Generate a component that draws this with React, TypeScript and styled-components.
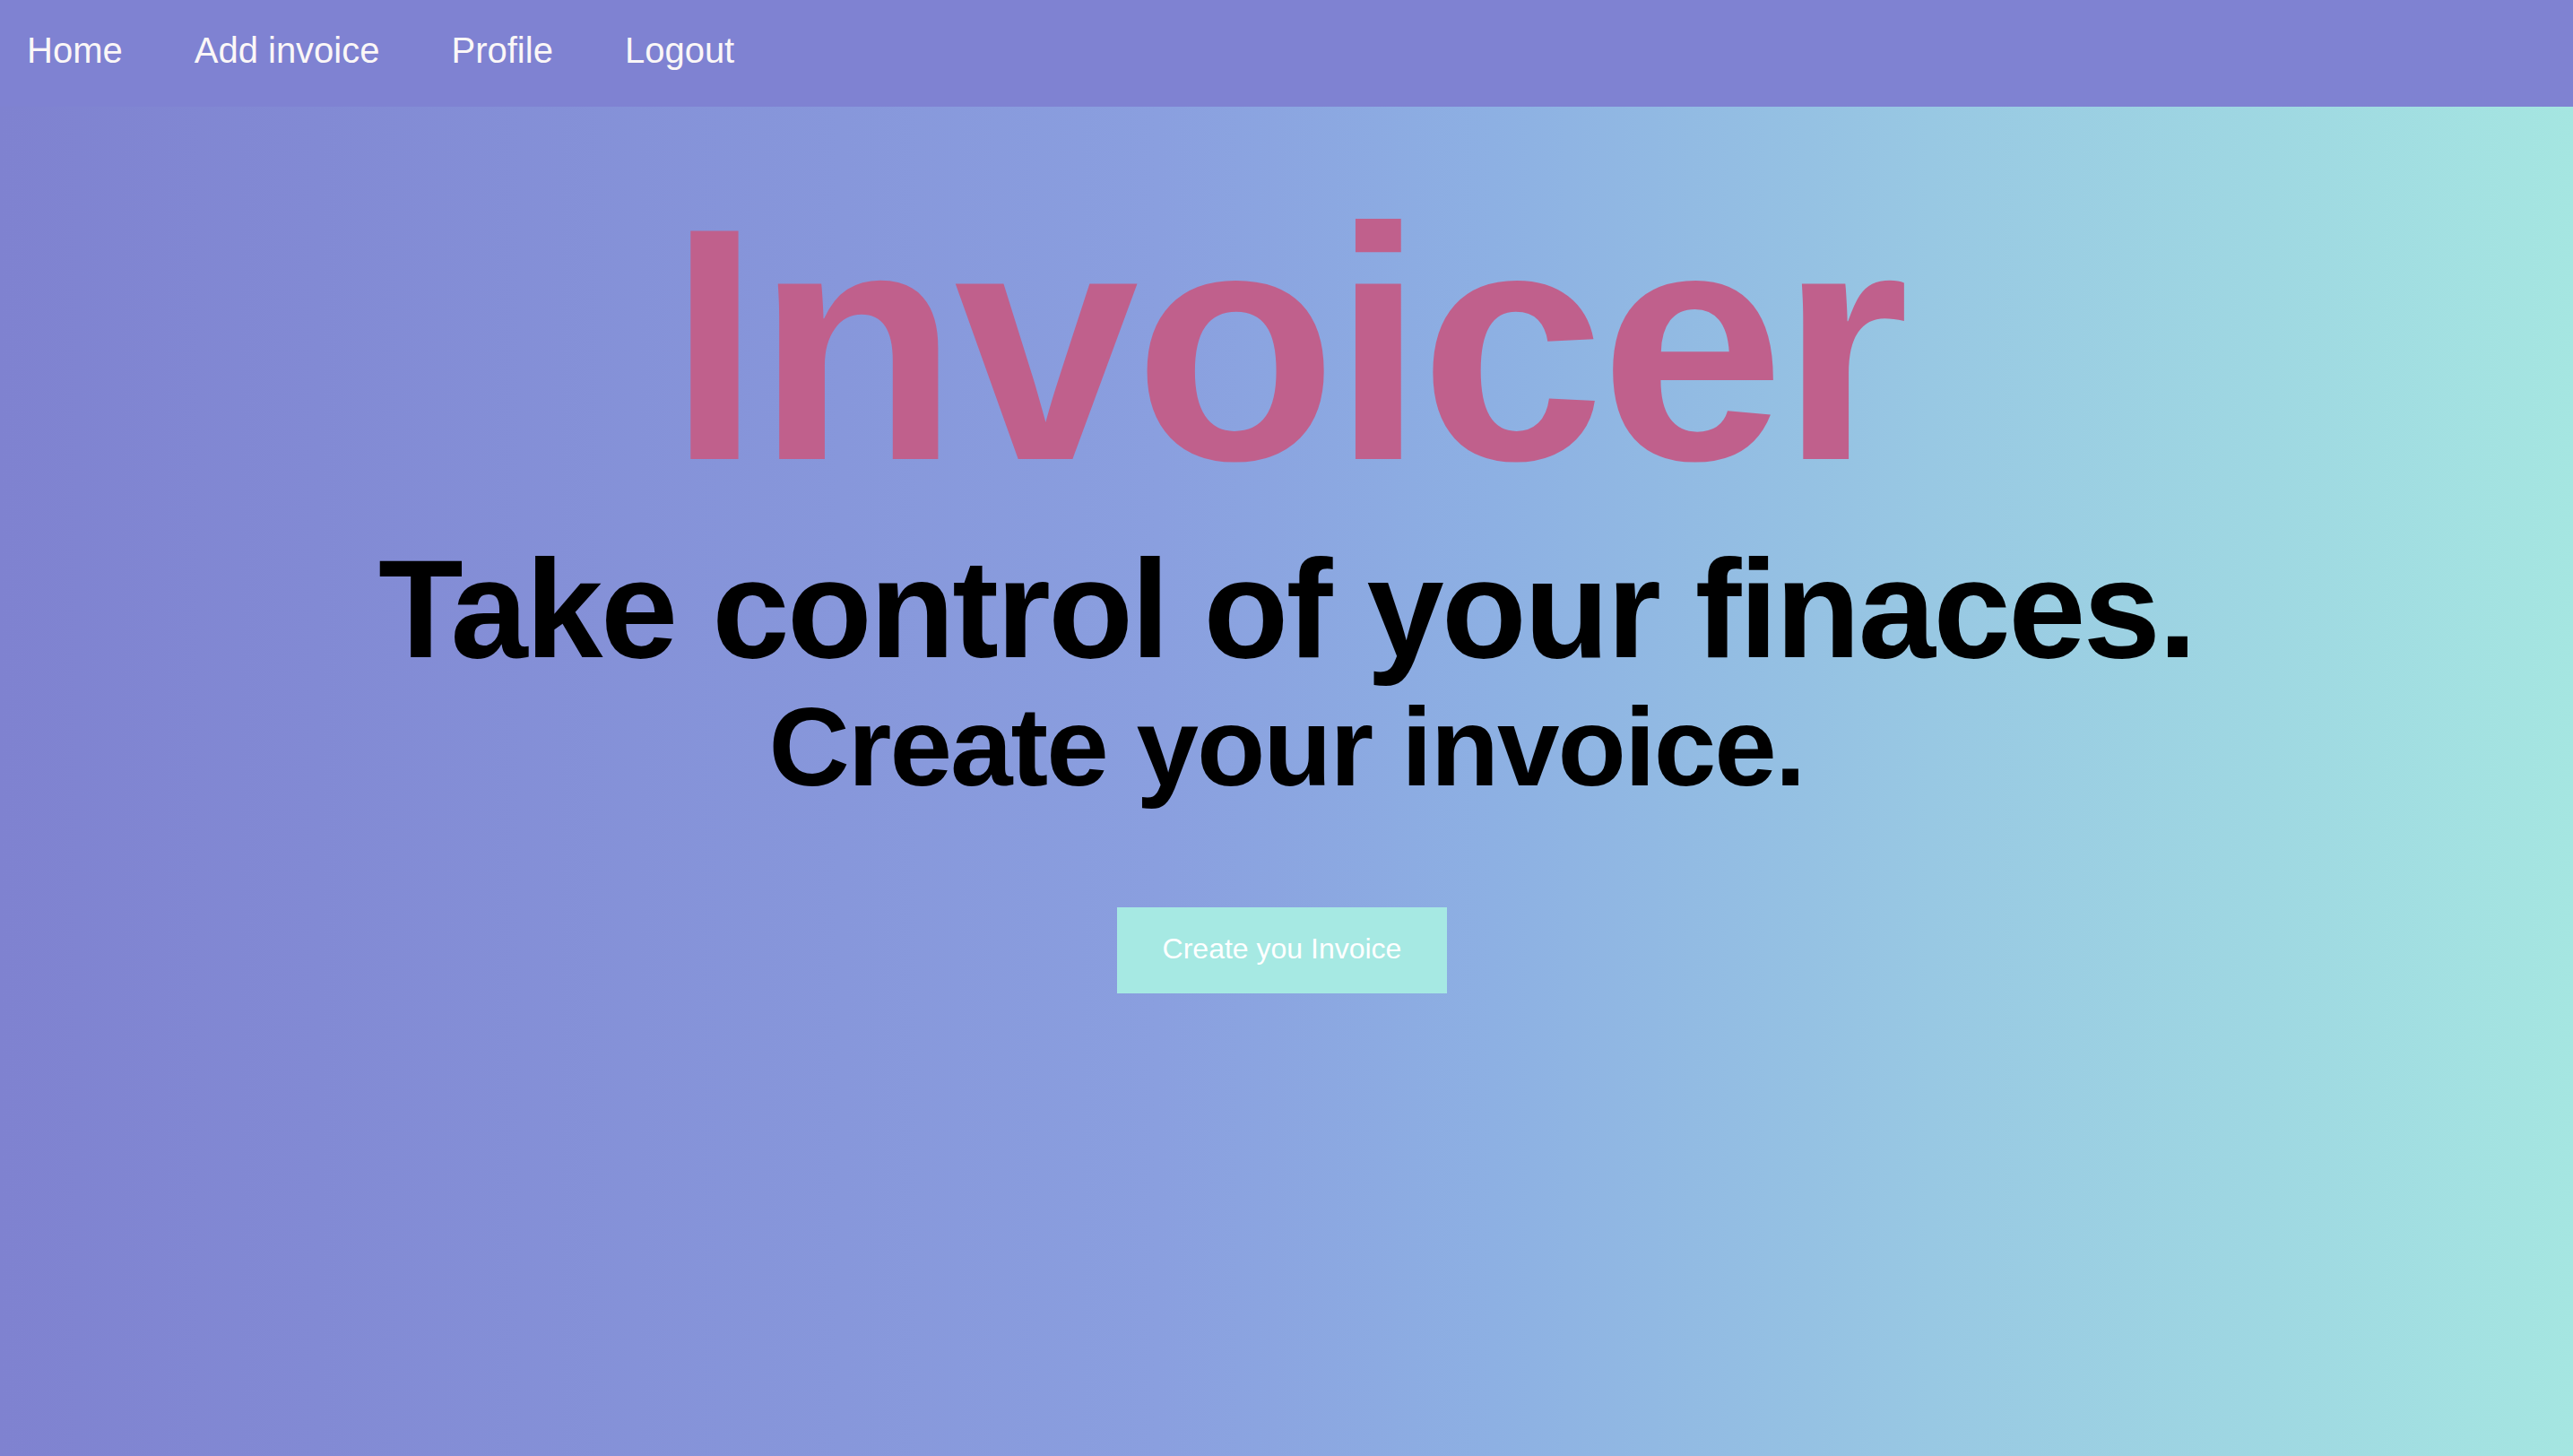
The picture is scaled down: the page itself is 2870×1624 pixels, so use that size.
import React from "react";
import styled, { createGlobalStyle } from "styled-components";

const GlobalStyle = createGlobalStyle`
  html, body {
    margin: 0;
    padding: 0;
  }
  body {
    font-family: "Liberation Sans", Arial, Helvetica, sans-serif;
  }
`;

const Page = styled.div`
  min-height: 100vh;
  display: flex;
  flex-direction: column;
  background: linear-gradient(to right, #7f82d0 0%, #8a9fdf 45%, #8db0e3 58%, #98c8e3 75%, #a5e6e1 100%);
`;

const NavBar = styled.nav`
  height: 119px;
  box-sizing: border-box;
  padding: 34px 30px 0;
  display: flex;
  align-items: flex-start;
  gap: 80px;
  background: #7f82d2;
`;

const NavLink = styled.a`
  font-size: 40px;
  color: #fbf7f7;
  text-decoration: none;
  cursor: pointer;
`;

const Hero = styled.main`
  display: flex;
  flex-direction: column;
  align-items: center;
  padding-top: 80px;
`;

const Title = styled.h1`
  margin: 0;
  font-size: 370px;
  line-height: 370px;
  letter-spacing: -5px;
  font-weight: 700;
  color: #c0608c;
`;

const Headline = styled.h2<{ $size: number; $gap: number; $track: number }>`
  margin: ${(p) => p.$gap}px 0 0;
  font-size: ${(p) => p.$size}px;
  line-height: ${(p) => p.$size}px;
  letter-spacing: ${(p) => p.$track}px;
  font-weight: 700;
  color: #000;
`;

const CreateButton = styled.button`
  margin: 117px 10px 0 0;
  width: 368px;
  height: 96px;
  box-sizing: border-box;
  padding: 0 0 3px;
  border: none;
  background: #a6e9e3;
  color: #ffffff;
  font-family: "Liberation Sans", Arial, Helvetica, sans-serif;
  font-size: 32px;
  display: flex;
  align-items: center;
  justify-content: center;
  cursor: pointer;
`;

export default function App() {
  return (
    <>
      <GlobalStyle />
      <Page>
        <NavBar>
          <NavLink>Home</NavLink>
          <NavLink>Add invoice</NavLink>
          <NavLink>Profile</NavLink>
          <NavLink>Logout</NavLink>
        </NavBar>
        <Hero>
          <Title>Invoicer</Title>
          <Headline $size={155} $gap={33} $track={-2.5}>
            Take control of your finaces.
          </Headline>
          <Headline $size={125} $gap={13} $track={-2}>
            Create your invoice.
          </Headline>
          <CreateButton>Create you Invoice</CreateButton>
        </Hero>
      </Page>
    </>
  );
}
